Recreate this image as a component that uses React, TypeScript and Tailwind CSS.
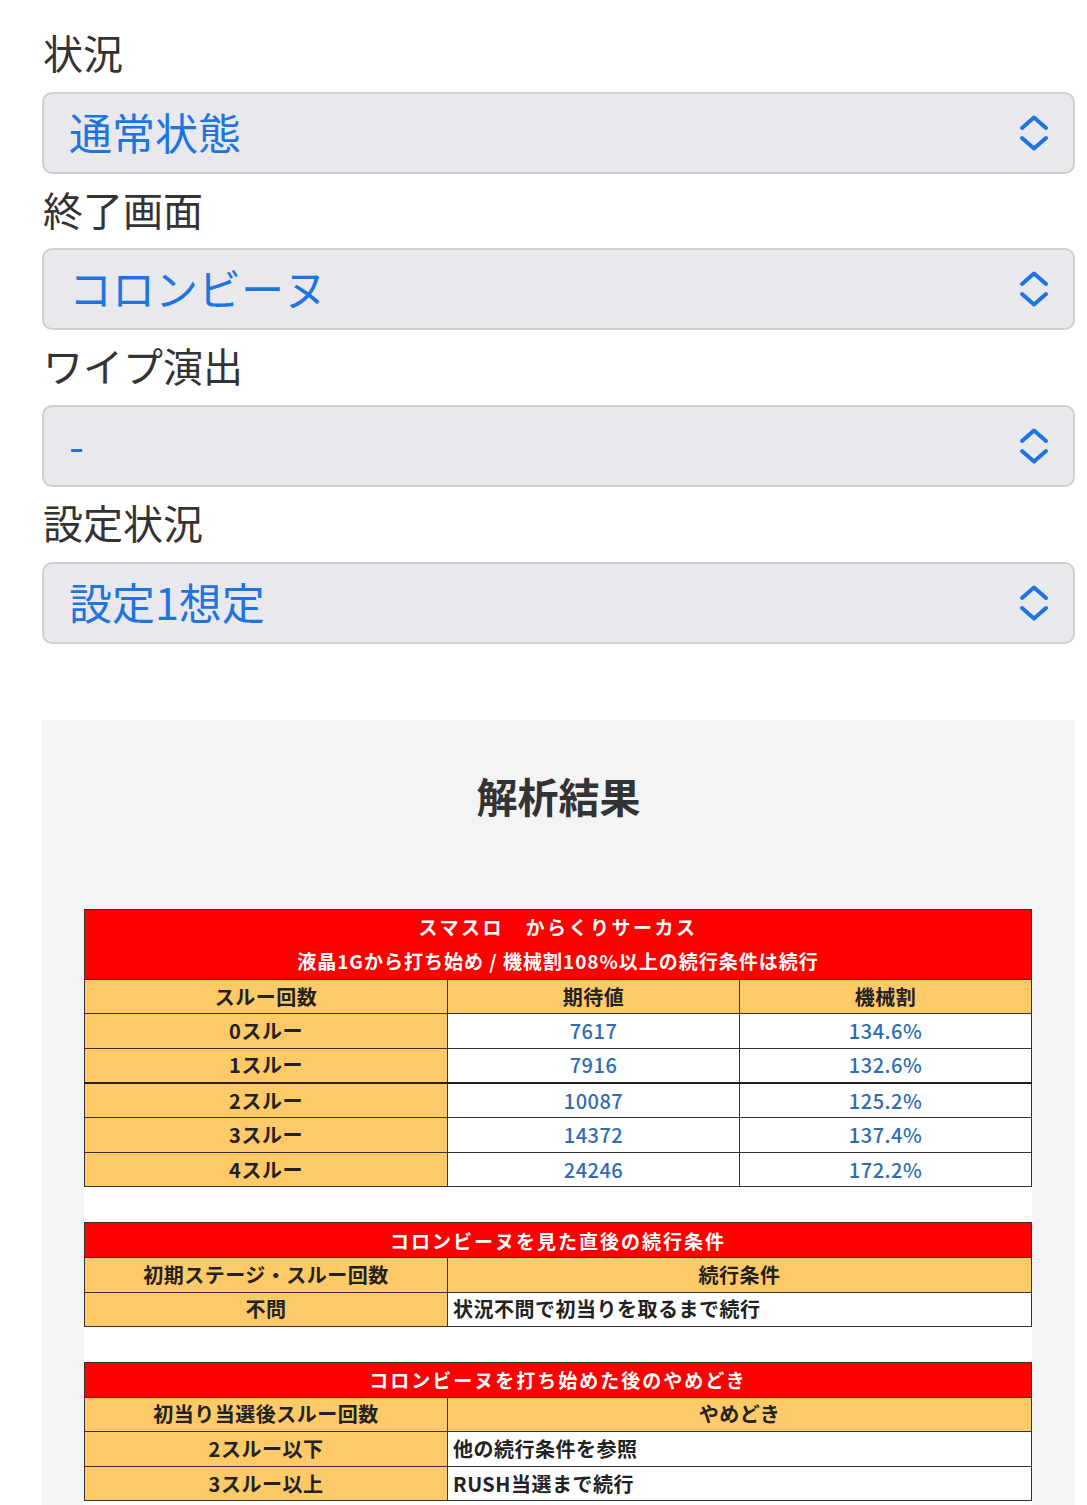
import React from "react";

const Chevron = () => (
  <svg width="30" height="38" viewBox="0 0 30 38" fill="none" stroke="#1e74e0" strokeWidth="4" strokeLinecap="round" strokeLinejoin="round">
    <path d="M3 14 L15 3.5 L27 14" />
    <path d="M3 24 L15 34.5 L27 24" />
  </svg>
);

const Field = ({ label, value }: { label: string; value: string }) => (
  <div className="flex flex-col">
    <div className="h-[74.7px] flex items-center text-[40px] leading-none text-[#333] pl-[1px] pb-[5px]">{label}</div>
    <div className="h-[82px] rounded-[10px] border-2 border-[#cfcfd2] bg-[#e9e9ed] flex items-center justify-between pl-[25px] pr-[24px]">
      <span className="text-[43px] leading-none text-[#1e74e0] pb-[3px]">{value}</span>
      <Chevron />
    </div>
  </div>
);

const td = "border border-[#333] h-[34.6px] p-0 align-middle";

export default function App() {
  const rows = [
    ["0スルー", "7617", "134.6%"],
    ["1スルー", "7916", "132.6%"],
    ["2スルー", "10087", "125.2%"],
    ["3スルー", "14372", "137.4%"],
    ["4スルー", "24246", "172.2%"],
  ];
  return (
    <div className="w-[1087px] min-h-[1505px] bg-white font-['Noto_Sans_CJK_JP',sans-serif]">
      <div className="pt-[17px] pl-[42px] pr-[12px] flex flex-col">
        <Field label="状況" value="通常状態" />
        <Field label="終了画面" value="コロンビーヌ" />
        <Field label="ワイプ演出" value="-" />
        <Field label="設定状況" value="設定1想定" />
      </div>
      <div className="mt-[76px] ml-[42px] w-[1033px] bg-[#f3f4f6] pl-[42px] pb-[40px]">
        <div className="h-[189px] flex items-center justify-center pr-[42px] pb-[38px]">
          <h2 className="text-[41px] font-bold leading-none text-[#333]">解析結果</h2>
        </div>
        <div className="w-[948px] bg-white font-bold text-[20px] leading-none text-[#222] tracking-[0.5px]">
          <table className="w-full border-collapse table-fixed">
            <colgroup>
              <col className="w-[363px]" />
              <col className="w-[292px]" />
              <col />
            </colgroup>
            <tbody>
              <tr>
                <td colSpan={3} className="border border-[#333] bg-[#ff0000] text-white text-center h-[69px] p-0">
                  <div className="text-[19px] tracking-[2.5px] leading-[34.5px]">スマスロ　からくりサーカス</div>
                  <div className="text-[19px] tracking-[1px] leading-[34.5px]">液晶1Gから打ち始め / 機械割108%以上の続行条件は続行</div>
                </td>
              </tr>
              <tr className="bg-[#fec967] text-center">
                <td className={td}>スルー回数</td>
                <td className={td}>期待値</td>
                <td className={td}>機械割</td>
              </tr>
              {rows.map((r, i) => (
                <tr key={i} className={`text-center ${i === 2 ? "border-t-2 border-[#222]" : ""}`}>
                  <td className={`${td} bg-[#fec967]`}>{r[0]}</td>
                  <td className={`${td} text-[#2e6db4] font-medium`}>{r[1]}</td>
                  <td className={`${td} text-[#2e6db4] font-medium`}>{r[2]}</td>
                </tr>
              ))}
            </tbody>
          </table>

          <div className="h-[35px]" />

          <table className="w-full border-collapse table-fixed">
            <colgroup>
              <col className="w-[363px]" />
              <col />
            </colgroup>
            <tbody>
              <tr>
                <td colSpan={2} className={`${td} bg-[#ff0000] text-white text-center text-[19px] tracking-[2px]`}>コロンビーヌを見た直後の続行条件</td>
              </tr>
              <tr className="bg-[#fec967] text-center">
                <td className={td}>初期ステージ・スルー回数</td>
                <td className={td}>続行条件</td>
              </tr>
              <tr>
                <td className={`${td} bg-[#fec967] text-center`}>不問</td>
                <td className={`${td} text-left pl-[5px]`}>状況不問で初当りを取るまで続行</td>
              </tr>
            </tbody>
          </table>

          <div className="h-[35px]" />

          <table className="w-full border-collapse table-fixed">
            <colgroup>
              <col className="w-[363px]" />
              <col />
            </colgroup>
            <tbody>
              <tr>
                <td colSpan={2} className={`${td} bg-[#ff0000] text-white text-center text-[19px] tracking-[2px]`}>コロンビーヌを打ち始めた後のやめどき</td>
              </tr>
              <tr className="bg-[#fec967] text-center">
                <td className={td}>初当り当選後スルー回数</td>
                <td className={td}>やめどき</td>
              </tr>
              <tr>
                <td className={`${td} bg-[#fec967] text-center`}>2スルー以下</td>
                <td className={`${td} text-left pl-[5px]`}>他の続行条件を参照</td>
              </tr>
              <tr>
                <td className={`${td} bg-[#fec967] text-center`}>3スルー以上</td>
                <td className={`${td} text-left pl-[5px]`}>RUSH当選まで続行</td>
              </tr>
            </tbody>
          </table>
          <div className="h-[20px]" />
        </div>
      </div>
    </div>
  );
}
